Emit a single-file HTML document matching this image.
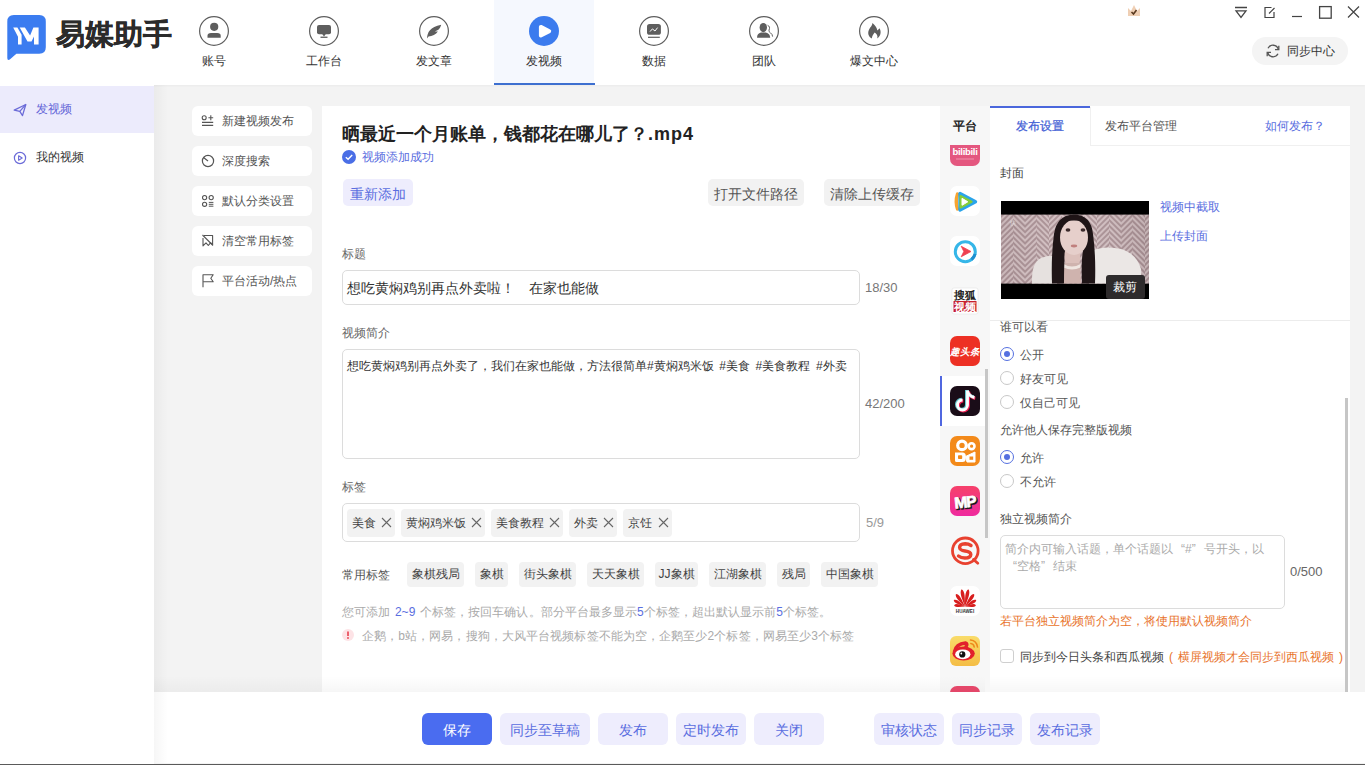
<!DOCTYPE html>
<html><head><meta charset="utf-8">
<style>
*{margin:0;padding:0;box-sizing:border-box}
html,body{width:1365px;height:765px;overflow:hidden;background:#f3f3f3;font-family:"Liberation Sans",sans-serif;color:#333}
.a{position:absolute}
.t{position:absolute;white-space:nowrap;line-height:1}
#hdr{left:0;top:0;width:1365px;height:85px;background:#fff;box-shadow:0 1px 2px rgba(0,0,0,0.04)}
.nav{position:absolute;top:0;width:100px;height:85px}
.nav .c{position:absolute;left:35px;top:16px;width:30px;height:30px;border:1px solid #5c5c5c;border-radius:50%}
.nav .l{position:absolute;left:0;width:100px;top:54px;text-align:center;font-size:12px;color:#333;line-height:14px}
#side{left:0;top:85px;width:154px;height:680px;background:#fff}
.card{position:absolute;left:192px;width:120px;height:30px;background:#fff;border-radius:6px}
.card .l{position:absolute;left:30px;top:8px;font-size:12px;color:#555;line-height:14px;white-space:nowrap}
#main{left:322px;top:106px;width:618px;height:586px;background:#fff}
.lbl{font-size:12px;color:#666}
.btn-g{position:absolute;background:#f2f2f2;border-radius:5px;font-size:14px;color:#555;text-align:center;line-height:31px;height:27px}
.inp{position:absolute;border:1px solid #dcdcdc;border-radius:5px;background:#fff}
.chip{position:absolute;height:28px;background:#f2f2f2;border-radius:4px;font-size:12px;color:#444;line-height:28px;padding-left:5px;white-space:nowrap}
.chip i{font-style:normal;font-size:14px;color:#555;margin-left:5px}
.ctag{position:absolute;top:562px;height:25px;background:#f2f2f2;border-radius:4px;font-size:12px;color:#444;line-height:25px;text-align:center;white-space:nowrap}
#plat{left:940px;top:106px;width:50px;height:586px;background:#f7f7f7;overflow:hidden}
.pi{position:absolute;left:10px;width:30px;height:30px;border-radius:7px;overflow:hidden}
#set{left:990px;top:106px;width:360px;height:586px;background:#fff;overflow:hidden}
.radio{position:absolute;left:1000px;width:14px;height:14px;border:1px solid #c8c8c8;border-radius:50%;background:#fff}
.radio.on{border-color:#5570e0}
.radio.on:after{content:"";position:absolute;left:3px;top:3px;width:6px;height:6px;border-radius:50%;background:#5570e0}
.rl{position:absolute;left:1020px;font-size:12px;color:#555;line-height:14px;white-space:nowrap}
#bot{left:154px;top:692px;width:1211px;height:71px;background:#fff}
.bb{position:absolute;top:713px;height:32px;border-radius:6px;background:#eeedfd;color:#5a6ee0;font-size:14px;line-height:34px;text-align:center}
.ql{display:inline-block;width:12px;text-align:right}.qr{display:inline-block;width:12px;text-align:left}
</style></head><body>
<!-- header -->
<div id="hdr" class="a"></div>
<!-- logo -->
<svg class="a" style="left:7px;top:14px" width="40" height="48" viewBox="0 0 40 48"><path d="M6.8 0.9H32.3Q38.8 0.9 38.8 7.4V33.3Q38.8 39.8 32.3 39.8H9.4L2.8 45.6Q0.3 47 0.3 44V7.4Q0.3 0.9 6.8 0.9Z" fill="#3b7cf0"/><path d="M6.2 13.4H10.4L14.6 20.8V30.4H11V22.8Z" fill="#fff"/><path d="M12.7 13.4H17.9L23.1 21.6L26.4 13.4H31.6V30.4H27V22.5L24.5 27.4H20.5Z" fill="#fff"/></svg>
<div class="t" style="left:56px;top:20px;font-size:29px;font-weight:bold;color:#2b2b2b;-webkit-text-stroke:0.35px #2b2b2b">易媒助手</div>

<!-- nav -->
<div class="nav" style="left:494px;background:#f5f8fe"></div>
<div class="a" style="left:494px;top:83px;width:101px;height:2px;background:#3d6fd0"></div>
<svg class="a" style="left:199px;top:16px" width="30" height="30" viewBox="0 0 30 30"><circle cx="15" cy="15" r="14.4" fill="none" stroke="#5e5e5e" stroke-width="1.2"/><circle cx="15.2" cy="10.8" r="4.1" fill="#5e5e5e"/><path d="M8.5 21.8V19.8Q8.5 17 12 17H18.2Q21.7 17 21.7 19.8V21.8Z" fill="#5e5e5e"/></svg>
<svg class="a" style="left:309px;top:16px" width="30" height="30" viewBox="0 0 30 30"><circle cx="15" cy="15" r="14.4" fill="none" stroke="#5e5e5e" stroke-width="1.2"/><rect x="8" y="9" width="14" height="9.2" rx="2" fill="#5e5e5e"/><path d="M13.2 18H16.8L15 20.6Z" fill="#5e5e5e"/><rect x="11.5" y="20.6" width="7" height="1.3" fill="#5e5e5e"/></svg>
<svg class="a" style="left:419px;top:16px" width="30" height="30" viewBox="0 0 30 30"><circle cx="15" cy="15" r="14.4" fill="none" stroke="#5e5e5e" stroke-width="1.2"/><path d="M8.1 22.6C8.2 16.5 11 11 22.2 8.8C21.6 11 20.6 12.6 19.4 13.8L15.8 15.6L18.9 15.5C17 18.6 13.2 20.2 9.5 20.4Z" fill="#5e5e5e"/></svg>
<svg class="a" style="left:529px;top:16px" width="30" height="30" viewBox="0 0 30 30"><circle cx="15" cy="15" r="15" fill="#3b7bee"/><path d="M11.8 10.8L20.3 15.2L11.8 19.6Z" fill="#fff" stroke="#fff" stroke-width="3.8" stroke-linejoin="round"/></svg>
<svg class="a" style="left:639px;top:16px" width="30" height="30" viewBox="0 0 30 30"><circle cx="15" cy="15" r="14.4" fill="none" stroke="#5e5e5e" stroke-width="1.2"/><rect x="8" y="7.9" width="13.9" height="10.9" rx="2.6" fill="#5e5e5e"/><path d="M11 15.6L13.4 12.9L16 15L18.6 11.6" fill="none" stroke="#fff" stroke-width="1"/><rect x="9" y="20.7" width="11.8" height="1.2" fill="#5e5e5e"/></svg>
<svg class="a" style="left:749px;top:16px" width="30" height="30" viewBox="0 0 30 30"><circle cx="15" cy="15" r="14.4" fill="none" stroke="#5e5e5e" stroke-width="1.2"/><ellipse cx="14.3" cy="11.6" rx="3.7" ry="4.6" fill="#5e5e5e"/><path d="M8 21.8Q8 17.5 12 16.6H16.8Q21 17.5 21.2 21.8Z" fill="#5e5e5e"/><path d="M18.6 9.3Q21.6 10.5 20 14.2Q19.5 15.6 21.4 16.8Q23.5 18.2 23.6 20.6" fill="none" stroke="#5e5e5e" stroke-width="1"/></svg>
<svg class="a" style="left:859px;top:16px" width="30" height="30" viewBox="0 0 30 30"><circle cx="15" cy="15" r="14.4" fill="none" stroke="#5e5e5e" stroke-width="1.2"/><path d="M13.4 7C15.5 9 18 11 18.3 14.5C19 13.6 19.8 13.2 20.4 12.2C22.3 15 22.3 19.5 18.3 22.4C19 19.5 17.5 18 15.6 16.6C14.5 18 13.2 20 12.8 22.5C9.5 20.8 8.2 17 10.2 13.2C11.5 10.8 13.4 9.6 13.4 7Z" fill="#5e5e5e"/></svg>
<div class="t" style="left:202px;top:55px;font-size:12px;color:#333">账号</div>
<div class="t" style="left:306px;top:55px;font-size:12px;color:#333">工作台</div>
<div class="t" style="left:416px;top:55px;font-size:12px;color:#333">发文章</div>
<div class="t" style="left:526px;top:55px;font-size:12px;color:#333">发视频</div>
<div class="t" style="left:642px;top:55px;font-size:12px;color:#333">数据</div>
<div class="t" style="left:752px;top:55px;font-size:12px;color:#333">团队</div>
<div class="t" style="left:850px;top:55px;font-size:12px;color:#333">爆文中心</div>
<!-- window controls -->
<svg class="a" style="left:1126px;top:3px" width="16" height="15" viewBox="0 0 16 15"><path d="M2 5L5 8L8 2L11 8L14 5V13H2Z" fill="#efcfb4"/><path d="M5.5 9L7.5 11L10.5 7" fill="none" stroke="#5a3a20" stroke-width="1.6"/></svg>
<svg class="a" style="left:1232px;top:4px" width="130" height="16" viewBox="0 0 130 16">
<path d="M3 3.5H15M4 6.8H14L9 13.5Z" fill="none" stroke="#444" stroke-width="1.3"/>
<path d="M39.5 3.5H33V13.5H42V8M37 9.5L42.5 4" fill="none" stroke="#444" stroke-width="1.2"/>
<path d="M60 12.5H70" stroke="#444" stroke-width="1.2"/>
<rect x="87.6" y="2.6" width="11.6" height="11.6" fill="none" stroke="#444" stroke-width="1.3"/>
<path d="M116 2.5L127 13.5M127 2.5L116 13.5" stroke="#444" stroke-width="1.2"/>
</svg>
<!-- sync center -->
<div class="a" style="left:1252px;top:37px;width:96px;height:28px;border-radius:14px;background:#f4f4f4"></div>
<svg class="a" style="left:1265px;top:43px" width="16" height="16" viewBox="0 0 16 16"><path d="M13.3 6.2A5.6 5.6 0 0 0 3 5.2M2.7 9.8A5.6 5.6 0 0 0 13 10.8" fill="none" stroke="#555" stroke-width="1.3"/><path d="M13.8 2.8V6.6H10" fill="none" stroke="#555" stroke-width="1.3"/><path d="M2.2 13.2V9.4H6" fill="none" stroke="#555" stroke-width="1.3"/></svg>
<div class="t" style="left:1287px;top:45px;font-size:12px;color:#333">同步中心</div>

<!-- sidebar -->
<div id="side" class="a"></div>
<div class="a" style="left:0;top:86px;width:154px;height:47px;background:#ecebfc"></div>
<svg class="a" style="left:13px;top:103px" width="14" height="14" viewBox="0 0 14 14"><path d="M1.2 7.2L12.8 1.5L9.5 12.6L6.8 8.4Z" fill="none" stroke="#6b6bd8" stroke-width="1.3" stroke-linejoin="round"/><path d="M6.8 8.4L12.8 1.5" stroke="#6b6bd8" stroke-width="1.2"/></svg>
<div class="t" style="left:36px;top:103px;font-size:12px;color:#6466d8">发视频</div>
<svg class="a" style="left:13px;top:151px" width="14" height="14" viewBox="0 0 14 14"><circle cx="7" cy="7" r="5.6" fill="none" stroke="#6b6bd8" stroke-width="1.2"/><path d="M5.6 4.8V9.2L9.2 7Z" fill="none" stroke="#6b6bd8" stroke-width="1.1" stroke-linejoin="round"/></svg>
<div class="t" style="left:36px;top:151px;font-size:12px;color:#333">我的视频</div>

<!-- cards -->
<div class="card" style="top:106px"><div class="l">新建视频发布</div></div>
<div class="card" style="top:146px"><div class="l">深度搜索</div></div>
<div class="card" style="top:186px"><div class="l">默认分类设置</div></div>
<div class="card" style="top:226px"><div class="l">清空常用标签</div></div>
<div class="card" style="top:266px"><div class="l">平台活动/热点</div></div>

<svg class="a" style="left:200px;top:113px" width="16" height="16" viewBox="0 0 16 16"><circle cx="4.2" cy="4.7" r="2" fill="none" stroke="#555" stroke-width="1.1"/><path d="M10.8 2.2V7.2M8.4 4.7H13.2M2 9.4H13.2M2 12.4H13.2" stroke="#555" stroke-width="1.1"/></svg>
<svg class="a" style="left:200px;top:153px" width="16" height="16" viewBox="0 0 16 16"><circle cx="8" cy="8" r="5.6" fill="none" stroke="#555" stroke-width="1.2"/><path d="M3.5 4.6L8 8" stroke="#555" stroke-width="1.2"/></svg>
<svg class="a" style="left:200px;top:193px" width="16" height="16" viewBox="0 0 16 16"><circle cx="4.6" cy="4.6" r="2.1" fill="none" stroke="#555" stroke-width="1.1"/><circle cx="11.2" cy="4.6" r="2.1" fill="none" stroke="#555" stroke-width="1.1"/><circle cx="4.6" cy="11.3" r="2.1" fill="none" stroke="#555" stroke-width="1.1"/><path d="M8.8 9.4H13.4M8.8 11.3H13.4M8.8 13.2H13.4" stroke="#555" stroke-width="1"/></svg>
<svg class="a" style="left:200px;top:233px" width="16" height="16" viewBox="0 0 16 16"><path d="M4 2.5H12.6V11.5L10.5 9.8L8.3 12.5L6 9.8L3 12.8V5" fill="none" stroke="#555" stroke-width="1.1" stroke-linejoin="round"/><path d="M2.5 2L13 12.5" stroke="#555" stroke-width="1.1"/></svg>
<svg class="a" style="left:200px;top:273px" width="16" height="16" viewBox="0 0 16 16"><path d="M3 14.3V1.8H13.2L10.8 5.2L13.2 8.8H3.6" fill="none" stroke="#555" stroke-width="1.1" stroke-linejoin="round"/></svg>
<!-- main -->
<div id="main" class="a"></div>
<div class="t" style="left:342px;top:125px;font-size:18px;font-weight:bold;color:#222">晒最近一个月账单，钱都花在哪儿了？<span style="letter-spacing:1px">.mp4</span></div>
<svg class="a" style="left:342px;top:150px" width="14" height="14" viewBox="0 0 14 14"><circle cx="7" cy="7" r="7" fill="#4a6ee6"/><path d="M3.8 7.2L6.1 9.3L10.2 5" fill="none" stroke="#fff" stroke-width="1.4"/></svg>
<div class="t" style="left:362px;top:151px;font-size:12px;color:#5a6ee0">视频添加成功</div>
<div class="a" style="left:343px;top:179px;width:70px;height:27px;border-radius:5px;background:#eeedfd;color:#5a6ee0;font-size:14px;line-height:31px;text-align:center">重新添加</div>
<div class="btn-g" style="left:708px;top:179px;width:96px">打开文件路径</div>
<div class="btn-g" style="left:824px;top:179px;width:96px">清除上传缓存</div>

<div class="t lbl" style="left:342px;top:248px">标题</div>
<div class="inp" style="left:342px;top:270px;width:518px;height:35px"></div>
<div class="t" style="left:347px;top:281px;font-size:14px;color:#333">想吃黄焖鸡别再点外卖啦！　在家也能做</div>
<div class="t" style="left:865px;top:281px;font-size:13px;color:#777">18/30</div>

<div class="t lbl" style="left:342px;top:327px">视频简介</div>
<div class="inp" style="left:342px;top:349px;width:518px;height:110px"></div>
<div class="t" style="left:347px;top:360px;font-size:12px;color:#333;word-spacing:2.3px">想吃黄焖鸡别再点外卖了，我们在家也能做，方法很简单#黄焖鸡米饭 #美食 #美食教程 #外卖</div>
<div class="t" style="left:865px;top:397px;font-size:13px;color:#777">42/200</div>

<div class="t lbl" style="left:342px;top:481px">标签</div>
<div class="inp" style="left:342px;top:503px;width:518px;height:39px">
</div>
<div class="chip" style="left:347px;top:509px;width:48px">美食</div>
<svg class="a" style="left:381px;top:517px" width="11" height="11" viewBox="0 0 11 11"><path d="M1 1L10 10M10 1L1 10" stroke="#666" stroke-width="1.1"/></svg>
<div class="chip" style="left:401px;top:509px;width:84px">黄焖鸡米饭</div>
<svg class="a" style="left:471px;top:517px" width="11" height="11" viewBox="0 0 11 11"><path d="M1 1L10 10M10 1L1 10" stroke="#666" stroke-width="1.1"/></svg>
<div class="chip" style="left:491px;top:509px;width:72px">美食教程</div>
<svg class="a" style="left:549px;top:517px" width="11" height="11" viewBox="0 0 11 11"><path d="M1 1L10 10M10 1L1 10" stroke="#666" stroke-width="1.1"/></svg>
<div class="chip" style="left:569px;top:509px;width:48px">外卖</div>
<svg class="a" style="left:603px;top:517px" width="11" height="11" viewBox="0 0 11 11"><path d="M1 1L10 10M10 1L1 10" stroke="#666" stroke-width="1.1"/></svg>
<div class="chip" style="left:623px;top:509px;width:49px">京饪</div>
<svg class="a" style="left:658px;top:517px" width="11" height="11" viewBox="0 0 11 11"><path d="M1 1L10 10M10 1L1 10" stroke="#666" stroke-width="1.1"/></svg>
<div class="ctag" style="left:407px;width:57px">象棋残局</div>
<div class="ctag" style="left:475px;width:33px">象棋</div>
<div class="ctag" style="left:519px;width:57px">街头象棋</div>
<div class="ctag" style="left:587px;width:57px">天天象棋</div>
<div class="ctag" style="left:655px;width:43px">JJ象棋</div>
<div class="ctag" style="left:709px;width:57px">江湖象棋</div>
<div class="ctag" style="left:777px;width:33px">残局</div>
<div class="ctag" style="left:821px;width:57px">中国象棋</div>
<svg class="a" style="left:342px;top:629px" width="12" height="12" viewBox="0 0 12 12"><circle cx="6" cy="6" r="6" fill="#fde3e6"/><path d="M6 2.6V7" stroke="#e8404f" stroke-width="1.6"/><circle cx="6" cy="9" r="0.9" fill="#e8404f"/></svg>
<div class="t" style="left:866px;top:516px;font-size:13px;color:#999">5/9</div>

<div class="t lbl" style="left:342px;top:569px;color:#555">常用标签</div>

<div class="t" style="left:342px;top:606px;font-size:12px;color:#aaa;letter-spacing:0.05px;word-spacing:1.3px">您可添加 <span style="color:#5a6ee0">2~9</span> 个标签，按回车确认。部分平台最多显示<span style="color:#5a6ee0">5</span>个标签，超出默认显示前<span style="color:#5a6ee0">5</span>个标签。</div>
<div class="t" style="left:362px;top:630px;font-size:12px;color:#aaa;letter-spacing:0.1px">企鹅，b站，网易，搜狗，大风平台视频标签不能为空，企鹅至少2个标签，网易至少3个标签</div>

<!-- platform column -->
<div id="plat" class="a"></div>
<div class="t" style="left:953px;top:120px;font-size:12px;font-weight:bold;color:#222">平台</div>

<!-- platform icons -->
<div class="a" style="left:940px;top:376px;width:45px;height:50px;background:#fff"></div>
<div class="a" style="left:940px;top:376px;width:2px;height:50px;background:#5067e0"></div>
<div class="a" style="left:940px;top:145px;width:50px;height:547px;overflow:hidden">
<svg class="a" style="left:10px;top:-9px" width="30" height="30" viewBox="0 0 30 30"><rect width="30" height="30" rx="7" fill="#e4577f"/><text x="15" y="18.5" font-size="9.5" font-weight="bold" fill="#fff" text-anchor="middle" font-family="Liberation Sans" letter-spacing="-0.3">bilibili</text><path d="M6 23H24" stroke="#f2a2ba" stroke-width="0.8"/></svg>
<svg class="a" style="left:10px;top:41px" width="30" height="30" viewBox="0 0 30 30"><rect width="30" height="30" rx="7" fill="#fff"/><path d="M7.5 8Q5 15.5 7.5 23" stroke="#f7a531" stroke-width="3.4" fill="none" stroke-linecap="round"/><path d="M10 7.5L25.5 15.7L10 24Z" fill="#2aa4ea" stroke="#2aa4ea" stroke-width="3.4" stroke-linejoin="round"/><path d="M10.5 10L21.5 15.7L10.5 21.4Z" fill="#84cc3a" stroke="#84cc3a" stroke-width="2.2" stroke-linejoin="round"/><path d="M12 12.3L17.8 15.8L12 19.3Z" fill="#fff" stroke="#fff" stroke-width="1" stroke-linejoin="round"/></svg>
<svg class="a" style="left:10px;top:91px" width="30" height="30" viewBox="0 0 30 30"><rect width="30" height="30" rx="7" fill="#fff"/><circle cx="15.3" cy="15.7" r="10" fill="none" stroke="#35b6e8" stroke-width="3"/><path d="M11.2 10.2L21 15.5L11.2 20.8L13.8 15.5Z" fill="#ef4050" stroke="#ef4050" stroke-width="0.8" stroke-linejoin="round"/><path d="M21.5 23.5A10 10 0 0 0 25 18" stroke="#1f8fd0" stroke-width="3" fill="none"/></svg>
<svg class="a" style="left:10px;top:141px" width="30" height="30" viewBox="0 0 30 30"><rect x="2" y="2" width="26" height="26" rx="2" fill="#fff" stroke="#ddd" stroke-width="0.5"/><text x="15" y="13" font-size="10.5" fill="#222" text-anchor="middle" font-weight="bold">搜狐</text><rect x="3.5" y="15" width="23" height="11" fill="#c8202f"/><text x="15" y="24.5" font-size="10.5" fill="#fff" text-anchor="middle" font-weight="bold">视频</text></svg>
<svg class="a" style="left:10px;top:191px" width="30" height="30" viewBox="0 0 30 30"><rect width="30" height="30" rx="7" fill="#ed3024"/><text x="15" y="19" font-size="9.5" fill="#fff" text-anchor="middle" font-weight="bold" font-style="italic">趣头条</text></svg>
<svg class="a" style="left:10px;top:241px" width="30" height="30" viewBox="0 0 30 30"><rect width="30" height="30" rx="7" fill="#1a0d18"/><path d="M18.3 5.3V19.8A5 5 0 1 1 13.3 14.8" fill="none" stroke="#ee1d52" stroke-width="3.4"/><path d="M18.3 5.8Q19.8 11.3 25.3 12.3" fill="none" stroke="#ee1d52" stroke-width="3.4"/><path d="M16.7 3.9V18.4A5 5 0 1 1 11.7 13.4" fill="none" stroke="#69c9d0" stroke-width="3.4"/><path d="M16.7 4.4Q18.2 9.9 23.7 10.9" fill="none" stroke="#69c9d0" stroke-width="3.4"/><path d="M17.5 4.5V19A5 5 0 1 1 12.5 14" fill="none" stroke="#fff" stroke-width="2.8"/><path d="M17.5 5Q19 10.5 24.5 11.5" fill="none" stroke="#fff" stroke-width="2.8"/></svg>
<svg class="a" style="left:10px;top:291px" width="30" height="30" viewBox="0 0 30 30"><rect width="30" height="30" rx="7" fill="#f38a1a"/><circle cx="12" cy="9.4" r="4.3" fill="none" stroke="#fff" stroke-width="3.2"/><circle cx="21.6" cy="10.2" r="2.9" fill="none" stroke="#fff" stroke-width="2.6"/><path d="M5 16.5H12.5Q15.8 16.5 15.8 20V22.5Q15.8 26 12.5 26H6.5Q5 26 5 24.5Z" fill="#fff"/><path d="M15.5 20.5L25 16V26H17Z" fill="#fff" stroke="#fff" stroke-width="1" stroke-linejoin="round"/><rect x="8" y="19.3" width="4.2" height="3.8" rx="0.8" fill="#f38a1a"/><path d="M19.5 20.5H23.2V23.8H19.5Z" fill="#f38a1a"/></svg>
<svg class="a" style="left:10px;top:341px" width="30" height="30" viewBox="0 0 30 30"><defs><linearGradient id="mpg" x1="0" y1="0" x2="0" y2="1"><stop offset="0" stop-color="#f6416a"/><stop offset="1" stop-color="#ef2a9f"/></linearGradient></defs><rect width="30" height="30" rx="7" fill="url(#mpg)"/><g transform="rotate(-6 15 15)"><text x="15.6" y="22.5" font-size="15.5" font-weight="bold" fill="#1a1a1a" stroke="#1a1a1a" stroke-width="1.6" text-anchor="middle" font-family="Liberation Sans" letter-spacing="-1.2">MP</text><text x="14.8" y="21.5" font-size="15.5" font-weight="bold" fill="#fff" stroke="#fff" stroke-width="0.8" stroke-linejoin="round" text-anchor="middle" font-family="Liberation Sans" letter-spacing="-1.2">MP</text></g></svg>
<svg class="a" style="left:10px;top:391px" width="30" height="30" viewBox="0 0 30 30"><circle cx="15.3" cy="14.8" r="12.8" fill="none" stroke="#e8412f" stroke-width="2.8"/><path d="M23.5 23.5L27.8 27.2" stroke="#e8412f" stroke-width="2.8" stroke-linecap="round"/><path d="M21 9.5Q18.5 7.8 15.2 7.8Q9.5 8 9.6 11.5Q9.8 14.3 15 15Q20.8 15.8 20.8 18.6Q20.6 22 14.8 22Q11 22 8.5 20" fill="none" stroke="#e8412f" stroke-width="3.4" stroke-linecap="round"/></svg>
<svg class="a" style="left:10px;top:441px" width="30" height="30" viewBox="0 0 30 30"><rect width="30" height="30" rx="7" fill="#fff"/><g fill="#d81e1e"><path d="M15 20.5C13.65 12.625 11.76 5.625 15 3.0C18.240000000000002 5.625 16.35 12.625 15 20.5Z" transform="rotate(-11 15 20.5)"/><path d="M15 20.5C13.65 12.625 11.76 5.625 15 3.0C18.240000000000002 5.625 16.35 12.625 15 20.5Z" transform="rotate(11 15 20.5)"/><path d="M15 20.5C13.7 13.524999999999999 11.879999999999999 7.325000000000001 15 5.0C18.12 7.325000000000001 16.3 13.524999999999999 15 20.5Z" transform="rotate(-36 15 20.5)"/><path d="M15 20.5C13.7 13.524999999999999 11.879999999999999 7.325000000000001 15 5.0C18.12 7.325000000000001 16.3 13.524999999999999 15 20.5Z" transform="rotate(36 15 20.5)"/><path d="M15 20.5C13.8 14.649999999999999 12.120000000000001 9.450000000000001 15 7.5C17.88 9.450000000000001 16.2 14.649999999999999 15 20.5Z" transform="rotate(-60 15 20.5)"/><path d="M15 20.5C13.8 14.649999999999999 12.120000000000001 9.450000000000001 15 7.5C17.88 9.450000000000001 16.2 14.649999999999999 15 20.5Z" transform="rotate(60 15 20.5)"/><path d="M15 20.5C13.95 15.55 12.48 11.15 15 9.5C17.52 11.15 16.05 15.55 15 20.5Z" transform="rotate(-83 15 20.5)"/><path d="M15 20.5C13.95 15.55 12.48 11.15 15 9.5C17.52 11.15 16.05 15.55 15 20.5Z" transform="rotate(83 15 20.5)"/></g><text x="15" y="27.3" font-size="4.6" font-weight="bold" fill="#333" text-anchor="middle" font-family="Liberation Sans">HUAWEI</text></svg>
<svg class="a" style="left:10px;top:491px" width="30" height="30" viewBox="0 0 30 30"><defs><linearGradient id="wbg" x1="0" y1="0" x2="0" y2="1"><stop offset="0" stop-color="#f9dc6a"/><stop offset="1" stop-color="#f4bd45"/></linearGradient></defs><rect width="30" height="30" rx="6" fill="url(#wbg)"/><ellipse cx="13.6" cy="17.6" rx="11.2" ry="7" fill="#e2202c"/><path d="M4.5 15.5Q6 8 15.5 7Q18 7.5 16 10.5" stroke="#e2202c" stroke-width="3.4" fill="none" stroke-linecap="round"/><ellipse cx="12.8" cy="18.3" rx="7.6" ry="4.9" fill="#fff"/><circle cx="12.3" cy="18.4" r="3.1" fill="#111"/><circle cx="11.3" cy="17.5" r="0.9" fill="#fff"/><path d="M20.5 4Q26.5 4.5 27.5 11M20.8 7.5Q23.8 7.8 24.2 11" stroke="#ee8a1b" stroke-width="1.6" fill="none" stroke-linecap="round"/></svg>
<svg class="a" style="left:10px;top:541px" width="30" height="30" viewBox="0 0 30 30"><rect width="30" height="30" rx="7" fill="#e8486b"/></svg>
</div>
<div class="a" style="left:985px;top:369px;width:3px;height:169px;background:#c6c6c6"></div>
<!-- settings -->
<div id="set" class="a"></div>
<div class="a" style="left:990px;top:106px;width:100px;height:2px;background:#4a67dc"></div>
<div class="a" style="left:1090px;top:107px;width:260px;height:39px;border-left:1px solid #f0f0f0;border-bottom:1px solid #f0f0f0"></div>
<div class="t" style="left:1016px;top:120px;font-size:12px;color:#4562d6;-webkit-text-stroke:0.25px #4562d6">发布设置</div>
<div class="t" style="left:1105px;top:120px;font-size:12px;color:#555">发布平台管理</div>
<div class="t" style="left:1265px;top:120px;font-size:12px;color:#5a6ee0">如何发布？</div>
<div class="t" style="left:1000px;top:167px;font-size:12px;color:#444">封面</div>
<svg class="a" style="left:1001px;top:201px" width="148" height="98" viewBox="0 0 148 98">
<defs>
<pattern id="hbA" width="4" height="4" patternUnits="userSpaceOnUse" patternTransform="rotate(45)"><rect width="4" height="4" fill="#ad9498"/><rect width="2" height="4" fill="#d4c1c3"/></pattern>
<pattern id="hbB" width="4" height="4" patternUnits="userSpaceOnUse" patternTransform="rotate(-45)"><rect width="4" height="4" fill="#ad9498"/><rect width="2" height="4" fill="#d4c1c3"/></pattern>
<linearGradient id="shade" x1="0" y1="0" x2="1" y2="0"><stop offset="0" stop-color="#000" stop-opacity="0.05"/><stop offset="0.5" stop-color="#fff" stop-opacity="0.05"/><stop offset="1" stop-color="#000" stop-opacity="0.08"/></linearGradient>
</defs>
<rect width="148" height="98" fill="#000"/>
<rect x="0" y="13.6" width="12" height="69" fill="url(#hbA)"/><rect x="12" y="13.6" width="12" height="69" fill="url(#hbB)"/><rect x="24" y="13.6" width="12" height="69" fill="url(#hbA)"/><rect x="36" y="13.6" width="12" height="69" fill="url(#hbB)"/><rect x="48" y="13.6" width="12" height="69" fill="url(#hbA)"/><rect x="60" y="13.6" width="12" height="69" fill="url(#hbB)"/><rect x="72" y="13.6" width="12" height="69" fill="url(#hbA)"/><rect x="84" y="13.6" width="12" height="69" fill="url(#hbB)"/><rect x="96" y="13.6" width="12" height="69" fill="url(#hbA)"/><rect x="108" y="13.6" width="12" height="69" fill="url(#hbB)"/><rect x="120" y="13.6" width="12" height="69" fill="url(#hbA)"/><rect x="132" y="13.6" width="12" height="69" fill="url(#hbB)"/><rect x="144" y="13.6" width="12" height="69" fill="url(#hbA)"/>
<rect y="13.6" width="148" height="69" fill="url(#shade)"/>
<path d="M31 82.6Q30 62 40 57Q48 54 53 55L56 82.6Z" fill="#e6e1df"/>
<path d="M88 82.6L90 50Q104 44 120 48Q136 53 140 68Q141 78 138 82.6Z" fill="#ebe7e5"/>
<path d="M62 82.6L63 62H79L80 82.6Z" fill="#cfb3ae"/>
<path d="M62.5 63Q71 68 79.5 63L79.5 66.5Q71 70.5 62.5 66.5Z" fill="#efe5e0"/>
<path d="M51 82.6Q50 55 53 33Q56 14 73 13.6Q90 14 92 33Q95 55 94 82.6H81Q80 60 82 50L64 50Q63 62 63 82.6Z" fill="#1f1517"/>
<path d="M64 50Q63 57 64.5 62H78.5Q79.5 57 79 50Z" fill="#dcc0bb"/>
<ellipse cx="73" cy="36.5" rx="14" ry="17.5" fill="#e6cfcb"/>
<path d="M58 30Q58 16 73 15Q88 16 88 30Q86 21 80 19Q74 20 66 19Q61 22 58 30Z" fill="#1f1517"/>
<ellipse cx="67" cy="29" rx="2.4" ry="1.8" fill="#3b2a2b"/><ellipse cx="82" cy="29" rx="2.4" ry="1.8" fill="#3b2a2b"/>
<ellipse cx="73" cy="45" rx="3.2" ry="1.4" fill="#c0807e"/>
<text x="9" y="24" font-size="6" fill="#eee" opacity="0.7">快</text>
<rect x="105" y="74" width="39" height="24" rx="3" fill="#2e2b2c"/>
<text x="124" y="89.5" font-size="12" fill="#fff" text-anchor="middle">裁剪</text>
</svg>
<div class="t" style="left:1160px;top:201px;font-size:12px;color:#5a6ee0">视频中截取</div>
<div class="t" style="left:1160px;top:230px;font-size:12px;color:#5a6ee0">上传封面</div>
<div class="a" style="left:990px;top:320px;width:360px;height:1px;background:#ececec"></div>
<div class="a" style="left:990px;top:321px;width:355px;height:371px;overflow:hidden">
<div class="t" style="left:10px;top:0px;font-size:12px;color:#555">谁可以看</div>
</div>
<div class="radio on" style="top:347px"></div><div class="rl" style="top:348px">公开</div>
<div class="radio" style="top:371px"></div><div class="rl" style="top:372px">好友可见</div>
<div class="radio" style="top:395px"></div><div class="rl" style="top:396px">仅自己可见</div>
<div class="t" style="left:1000px;top:424px;font-size:12px;color:#555">允许他人保存完整版视频</div>
<div class="radio on" style="top:450px"></div><div class="rl" style="top:451px">允许</div>
<div class="radio" style="top:474px"></div><div class="rl" style="top:475px">不允许</div>
<div class="t" style="left:1000px;top:513px;font-size:12px;color:#555">独立视频简介</div>
<div class="inp" style="left:1000px;top:535px;width:285px;height:74px"></div>
<div class="a" style="left:1005px;top:541px;width:280px;font-size:12px;line-height:17px;color:#aaa;white-space:nowrap">简介内可输入话题，单个话题以<span class="ql">“</span>#<span class="qr">”</span>号开头，以<br><span class="ql">“</span>空格<span class="qr">”</span>结束</div>
<div class="t" style="left:1290px;top:565px;font-size:13px;color:#666">0/500</div>
<div class="t" style="left:1000px;top:615px;font-size:12px;color:#e8732b">若平台独立视频简介为空，将使用默认视频简介</div>
<div class="a" style="left:1000px;top:649px;width:14px;height:14px;border:1px solid #cfcfcf;border-radius:3px;background:#fff"></div>
<div class="t" style="left:1020px;top:651px;font-size:12px;color:#444">同步到今日头条和西瓜视频<span style="color:#e8732b"><span class="ql" style="width:14px;text-align:center">(</span>横屏视频才会同步到西瓜视频<span class="qr" style="width:14px;text-align:center">)</span></span></div>
<div class="a" style="left:1345px;top:398px;width:3px;height:294px;background:#c6c6c6"></div>

<div class="a" style="left:322px;top:676px;width:618px;height:16px;background:linear-gradient(rgba(0,0,0,0),rgba(0,0,0,0.035))"></div>
<div class="a" style="left:154px;top:676px;width:168px;height:16px;background:linear-gradient(rgba(0,0,0,0),rgba(0,0,0,0.03))"></div>
<div class="a" style="left:990px;top:676px;width:355px;height:16px;background:linear-gradient(rgba(0,0,0,0),rgba(0,0,0,0.03))"></div>
<div class="a" style="left:940px;top:676px;width:45px;height:16px;background:linear-gradient(rgba(0,0,0,0),rgba(0,0,0,0.025))"></div>
<!-- bottom -->
<div id="bot" class="a"></div>
<div class="bb" style="left:422px;width:70px;background:#4a6cf0;color:#fff">保存</div>
<div class="bb" style="left:500px;width:90px">同步至草稿</div>
<div class="bb" style="left:598px;width:70px">发布</div>
<div class="bb" style="left:676px;width:70px">定时发布</div>
<div class="bb" style="left:754px;width:70px">关闭</div>
<div class="bb" style="left:874px;width:70px">审核状态</div>
<div class="bb" style="left:952px;width:70px">同步记录</div>
<div class="bb" style="left:1030px;width:70px">发布记录</div>
<div class="a" style="left:154px;top:85px;width:14px;height:678px;background:linear-gradient(90deg,rgba(0,0,0,0.035),rgba(0,0,0,0))"></div>
<div class="a" style="left:0;top:764px;width:1365px;height:1px;background:#5a5a5a"></div>
</body></html>
